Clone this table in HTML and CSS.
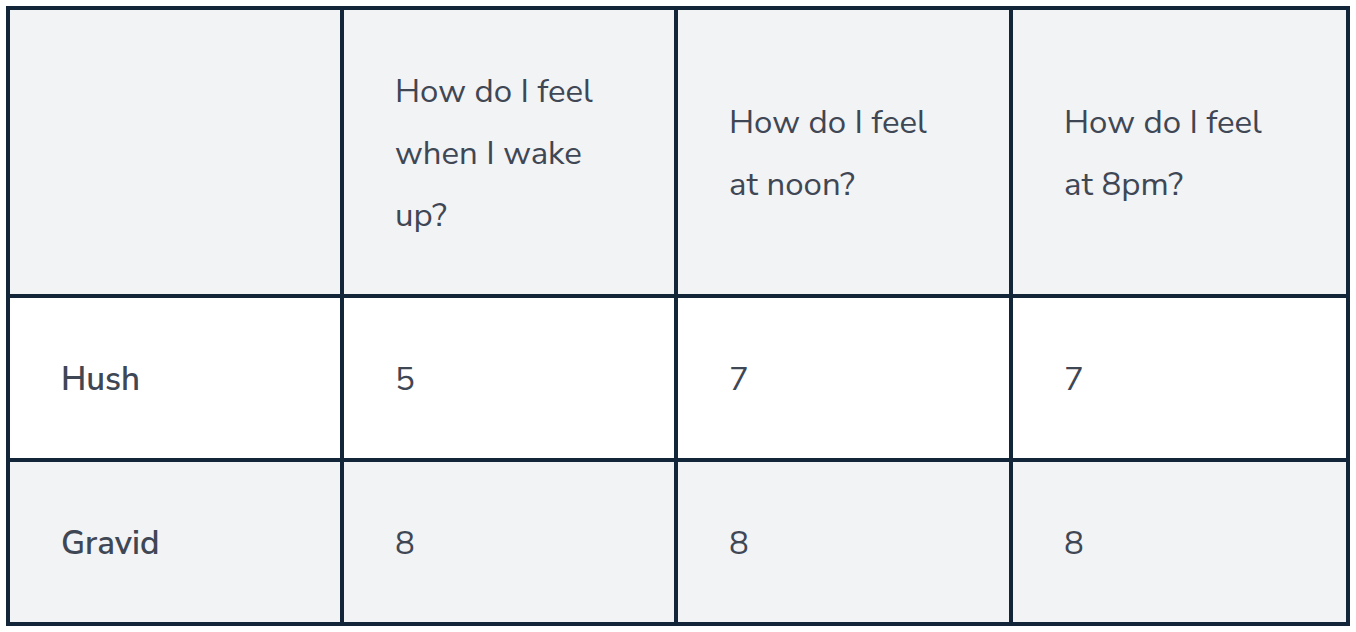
FILE: index.html
```html
<!DOCTYPE html>
<html>
<head>
<meta charset="utf-8">
<link rel="stylesheet" href="styles.css">
</head>
<body>
<table class="grid">
  <colgroup>
    <col class="c1"><col class="c2"><col class="c3"><col class="c4">
  </colgroup>
  <thead>
    <tr class="head">
      <th></th>
      <th>How do I feel<br>when I wake<br>up?</th>
      <th>How do I feel<br>at noon?</th>
      <th>How do I feel<br>at 8pm?</th>
    </tr>
  </thead>
  <tbody>
    <tr class="row light">
      <th class="name">Hush</th>
      <td>5</td>
      <td>7</td>
      <td>7</td>
    </tr>
    <tr class="row shade">
      <th class="name">Gravid</th>
      <td>8</td>
      <td>8</td>
      <td>8</td>
    </tr>
  </tbody>
</table>
</body>
</html>
```
FILE: styles.css
```css
html, body {
  margin: 0;
  padding: 0;
  background: #ffffff;
}
body {
  padding: 6px;
  font-family: "Nunito Sans", Lato, "Open Sans", sans-serif;
  color: #3f4754;
}
.grid {
  border-collapse: separate;
  border-spacing: 0;
  table-layout: fixed;
  width: 1344px;
  background: #132538;
  border: 4px solid #132538;
}
.c1 { width: 334px; }
.c2 { width: 334px; }
.c3 { width: 335px; }
.c4 { width: 333px; }
.grid th, .grid td {
  box-sizing: border-box;
  text-align: left;
  vertical-align: middle;
  padding: 4px 0 0 51px;
  font-size: 33px;
  line-height: 62px;
  font-weight: 400;
  border-right: 4px solid #132538;
  border-bottom: 4px solid #132538;
}
.grid tr > *:last-child { border-right: 0; }
.grid tbody tr:last-child > * { border-bottom: 0; }
.head th {
  height: 288px;
  background: #f2f3f5;
}
.row th, .row td { height: 164px; }
.grid tbody tr:last-child > * { height: 160px; }
.light > * { background: #ffffff; }
.shade > * { background: #f2f3f5; }
.grid .name { font-weight: 600; }
```
